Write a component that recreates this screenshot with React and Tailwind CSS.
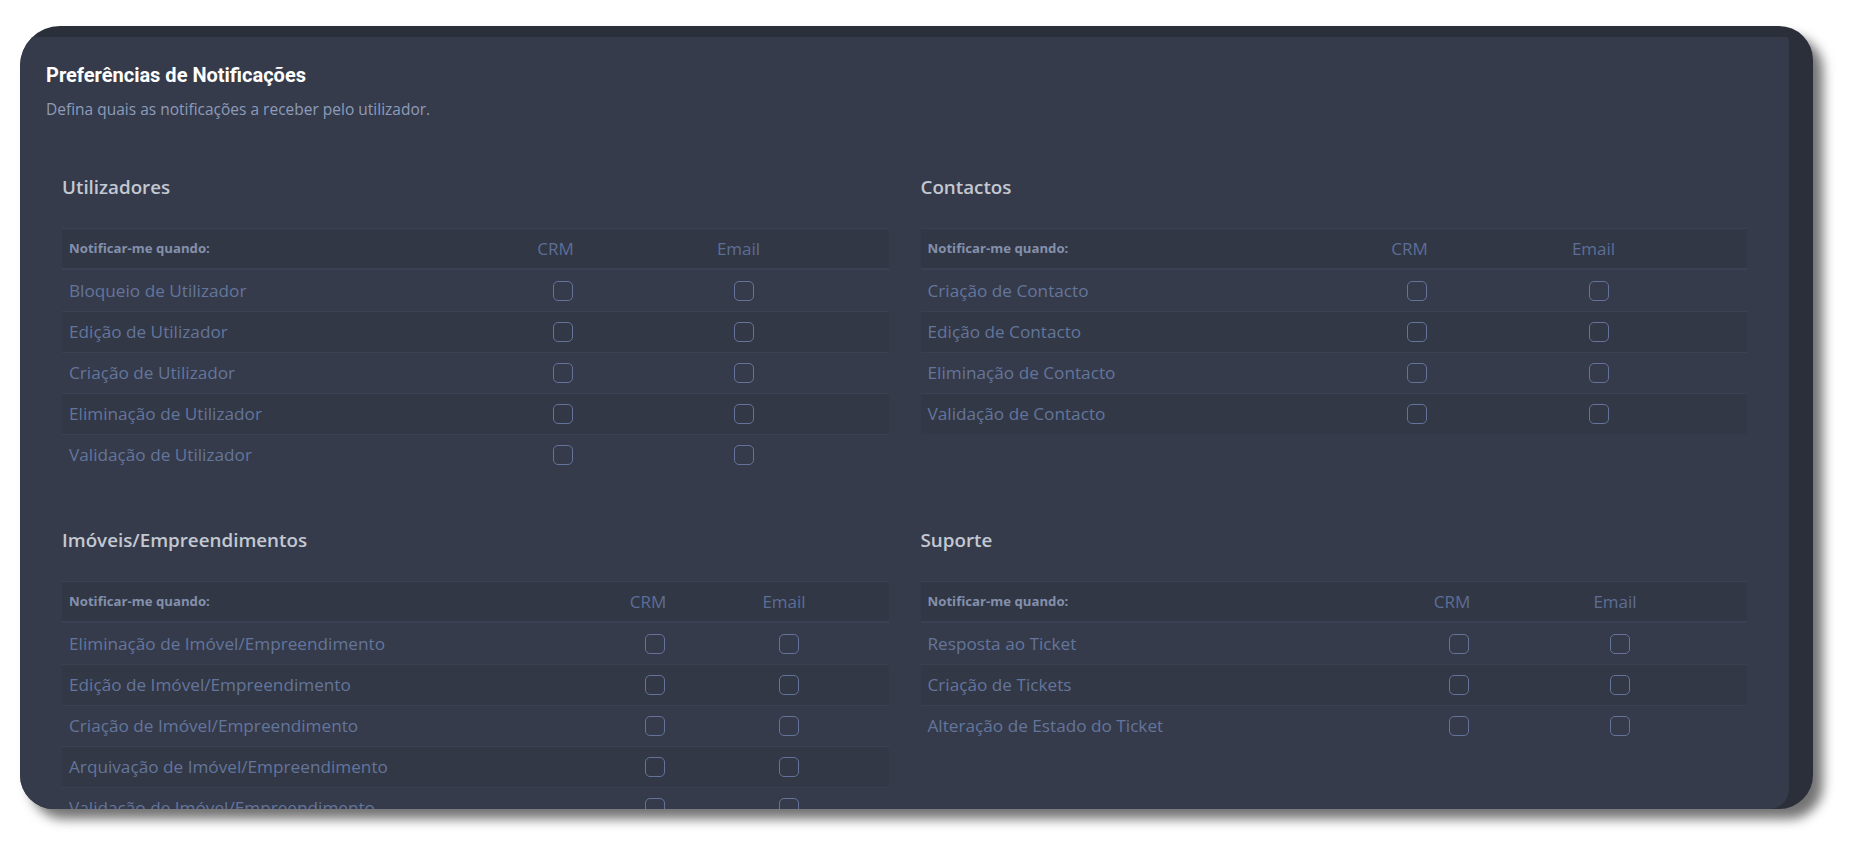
const sections = [
  {
    title: 'Utilizadores',
    cols: 'grid-cols-[402px_183px_183px_1fr]',
    rows: [
      'Bloqueio de Utilizador',
      'Edição de Utilizador',
      'Criação de Utilizador',
      'Eliminação de Utilizador',
      'Validação de Utilizador',
    ],
  },
  {
    title: 'Contactos',
    cols: 'grid-cols-[397px_184px_184px_1fr]',
    rows: ['Criação de Contacto', 'Edição de Contacto', 'Eliminação de Contacto', 'Validação de Contacto'],
  },
  {
    title: 'Imóveis/Empreendimentos',
    cols: 'grid-cols-[518px_136px_136px_1fr]',
    rows: [
      'Eliminação de Imóvel/Empreendimento',
      'Edição de Imóvel/Empreendimento',
      'Criação de Imóvel/Empreendimento',
      'Arquivação de Imóvel/Empreendimento',
      'Validação de Imóvel/Empreendimento',
    ],
  },
  {
    title: 'Suporte',
    cols: 'grid-cols-[450px_163px_163px_1fr]',
    rows: ['Resposta ao Ticket', 'Criação de Tickets', 'Alteração de Estado do Ticket'],
  },
];

const Box = () => (
  <span className="block h-[20px] w-[20px] rounded-[5px] border-[1.5px] border-[#64739a]" />
);

const PreferenceTable = ({ title, cols, rows }) => (
  <div>
    <h3 className="mb-[28px] text-[18.8px] leading-[26px] font-semibold text-[#c3c8d2]">{title}</h3>
    <div>
      <div className={`grid ${cols} h-[42px] items-center border-t border-b-2 border-[#3a4152] bg-[#313744]`}>
        <span className="pl-[7px] text-[13.2px] font-bold text-[#8490ac]">Notificar-me quando:</span>
        <span className="text-center text-[17px] text-[#5d6e96]">CRM</span>
        <span className="text-center text-[17px] text-[#5d6e96]">Email</span>
        <span />
      </div>
      {rows.map((label, i) => (
        <div
          key={label}
          className={`grid ${cols} h-[41px] items-center ${i > 0 ? 'border-t border-[#3a4152]' : ''} ${
            i % 2 === 1 ? 'bg-[#323845]' : ''
          }`}
        >
          <span className="pl-[7px] text-[17.2px] text-[#64759c]">{label}</span>
          <span className="flex justify-center pl-[14px]">
            <Box />
          </span>
          <span className="flex justify-center pl-[10px]">
            <Box />
          </span>
          <span />
        </div>
      ))}
    </div>
  </div>
);

export default function App() {
  return (
    <div className="min-h-screen bg-white pt-[26px] pl-[20px] font-['Open_Sans',sans-serif]">
      <div className="h-[783px] w-[1793px] overflow-hidden rounded-[34px] rounded-tl-[40px] bg-[#2a2f3a] pt-[11px] pr-[24px] shadow-[10px_10px_12px_rgba(0,0,0,0.55)]">
        <div className="h-full overflow-hidden rounded-tr-[4px] rounded-br-[20px] bg-[#353b4a] px-[26px] pt-[25px]">
          <h2 className="font-['Roboto',sans-serif] text-[20px] leading-[26px] font-bold text-white">
            Preferências de Notificações
          </h2>
          <p className="mt-[10px] text-[15.5px] leading-[22px] text-[#8e9bba]">
            Defina quais as notificações a receber pelo utilizador.
          </p>
          <div className="mt-[54px] grid grid-cols-2 gap-x-[32px] gap-y-[52px] px-[16px]">
            {sections.map((s) => (
              <PreferenceTable key={s.title} {...s} />
            ))}
          </div>
        </div>
      </div>
    </div>
  );
}
